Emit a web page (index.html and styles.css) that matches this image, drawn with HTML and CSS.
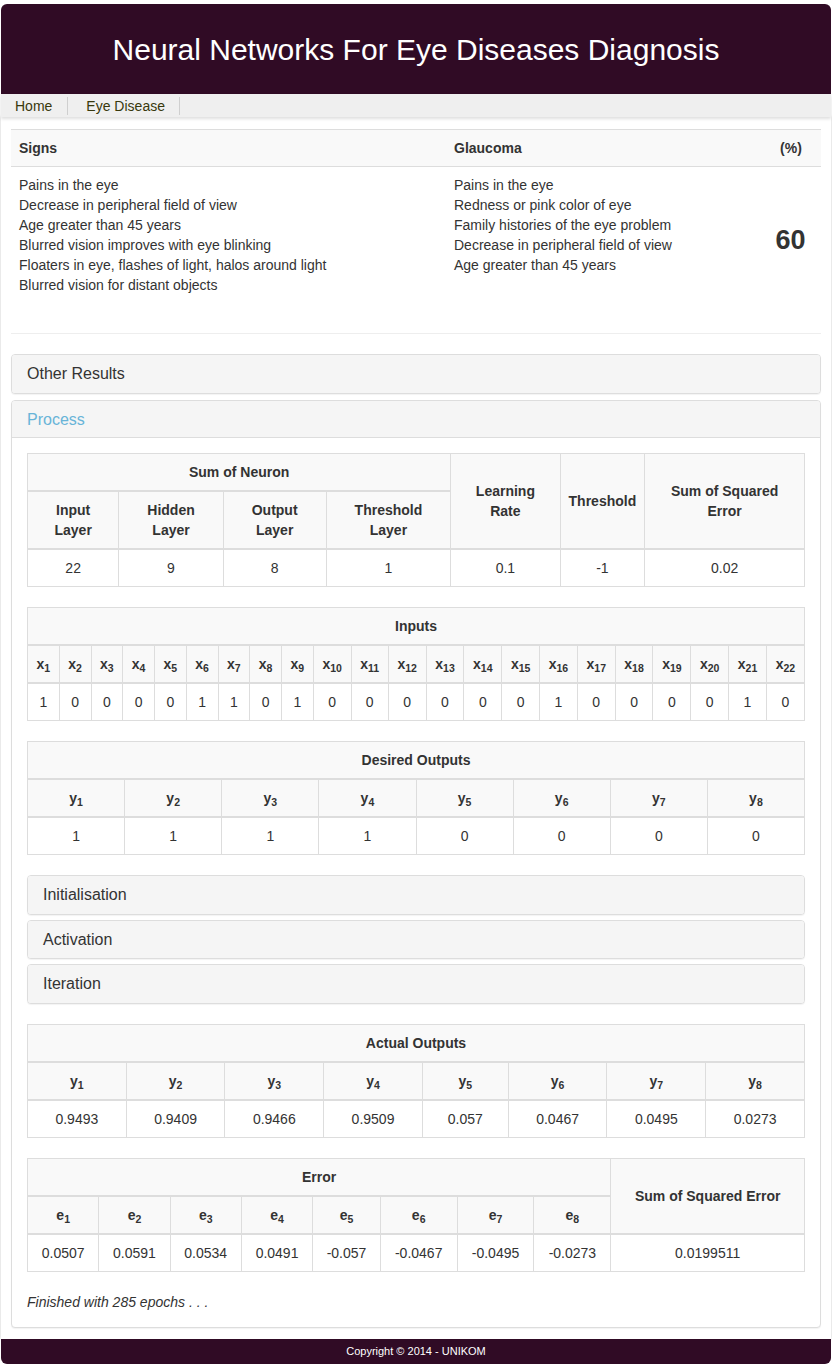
FILE: index.html
```html
<!DOCTYPE html>
<html lang="en">
<head>
<meta charset="utf-8">
<title>Neural Networks For Eye Diseases Diagnosis</title>
<link rel="stylesheet" href="styles.css">
</head>
<body>
<div class="page">
  <header class="site-header">
    <h1>Neural Networks For Eye Diseases Diagnosis</h1>
  </header>
  <nav class="nav">
    <a class="nav-item" href="#">Home</a>
    <a class="nav-item" href="#">Eye Disease</a>
  </nav>
  <main class="main">
    <table class="table signs">
      <thead>
        <tr>
          <th class="col-signs">Signs</th>
          <th class="col-disease">Glaucoma</th>
          <th class="col-pct">(%)</th>
        </tr>
      </thead>
      <tbody>
        <tr>
          <td>Pains in the eye<br>Decrease in peripheral field of view<br>Age greater than 45 years<br>Blurred vision improves with eye blinking<br>Floaters in eye, flashes of light, halos around light<br>Blurred vision for distant objects</td>
          <td>Pains in the eye<br>Redness or pink color of eye<br>Family histories of the eye problem<br>Decrease in peripheral field of view<br>Age greater than 45 years</td>
          <td class="pct">60</td>
        </tr>
      </tbody>
    </table>
    <hr class="divider">

    <div class="panel">
      <div class="panel-heading">Other Results</div>
    </div>
    <div class="panel panel-process">
      <div class="panel-heading panel-heading-open">Process</div>
      <div class="panel-body">
        <table class="table grid">
          <thead>
            <tr>
              <th colspan="4">Sum of Neuron</th>
              <th rowspan="2">Learning Rate</th>
              <th rowspan="2">Threshold</th>
              <th rowspan="2">Sum of Squared Error</th>
            </tr>
            <tr>
              <th>Input Layer</th>
              <th>Hidden Layer</th>
              <th>Output Layer</th>
              <th>Threshold Layer</th>
            </tr>
          </thead>
          <tbody>
            <tr><td>22</td><td>9</td><td>8</td><td>1</td><td>0.1</td><td>-1</td><td>0.02</td></tr>
          </tbody>
        </table>

        <table class="table grid">
          <thead>
            <tr><th colspan="22">Inputs</th></tr>
            <tr>
              <th>x<sub>1</sub></th><th>x<sub>2</sub></th><th>x<sub>3</sub></th><th>x<sub>4</sub></th><th>x<sub>5</sub></th><th>x<sub>6</sub></th><th>x<sub>7</sub></th><th>x<sub>8</sub></th><th>x<sub>9</sub></th><th>x<sub>10</sub></th><th>x<sub>11</sub></th><th>x<sub>12</sub></th><th>x<sub>13</sub></th><th>x<sub>14</sub></th><th>x<sub>15</sub></th><th>x<sub>16</sub></th><th>x<sub>17</sub></th><th>x<sub>18</sub></th><th>x<sub>19</sub></th><th>x<sub>20</sub></th><th>x<sub>21</sub></th><th>x<sub>22</sub></th>
            </tr>
          </thead>
          <tbody>
            <tr><td>1</td><td>0</td><td>0</td><td>0</td><td>0</td><td>1</td><td>1</td><td>0</td><td>1</td><td>0</td><td>0</td><td>0</td><td>0</td><td>0</td><td>0</td><td>1</td><td>0</td><td>0</td><td>0</td><td>0</td><td>1</td><td>0</td></tr>
          </tbody>
        </table>

        <table class="table grid">
          <thead>
            <tr><th colspan="8">Desired Outputs</th></tr>
            <tr><th>y<sub>1</sub></th><th>y<sub>2</sub></th><th>y<sub>3</sub></th><th>y<sub>4</sub></th><th>y<sub>5</sub></th><th>y<sub>6</sub></th><th>y<sub>7</sub></th><th>y<sub>8</sub></th></tr>
          </thead>
          <tbody>
            <tr><td>1</td><td>1</td><td>1</td><td>1</td><td>0</td><td>0</td><td>0</td><td>0</td></tr>
          </tbody>
        </table>

        <div class="panel-group">
          <div class="panel"><div class="panel-heading">Initialisation</div></div>
          <div class="panel"><div class="panel-heading">Activation</div></div>
          <div class="panel"><div class="panel-heading">Iteration</div></div>
        </div>

        <table class="table grid">
          <thead>
            <tr><th colspan="8">Actual Outputs</th></tr>
            <tr><th>y<sub>1</sub></th><th>y<sub>2</sub></th><th>y<sub>3</sub></th><th>y<sub>4</sub></th><th>y<sub>5</sub></th><th>y<sub>6</sub></th><th>y<sub>7</sub></th><th>y<sub>8</sub></th></tr>
          </thead>
          <tbody>
            <tr><td>0.9493</td><td>0.9409</td><td>0.9466</td><td>0.9509</td><td>0.057</td><td>0.0467</td><td>0.0495</td><td>0.0273</td></tr>
          </tbody>
        </table>

        <table class="table grid">
          <thead>
            <tr><th colspan="8">Error</th><th rowspan="2">Sum of Squared Error</th></tr>
            <tr><th>e<sub>1</sub></th><th>e<sub>2</sub></th><th>e<sub>3</sub></th><th>e<sub>4</sub></th><th>e<sub>5</sub></th><th>e<sub>6</sub></th><th>e<sub>7</sub></th><th>e<sub>8</sub></th></tr>
          </thead>
          <tbody>
            <tr><td>0.0507</td><td>0.0591</td><td>0.0534</td><td>0.0491</td><td>-0.057</td><td>-0.0467</td><td>-0.0495</td><td>-0.0273</td><td>0.0199511</td></tr>
          </tbody>
        </table>

        <p class="finished">Finished with 285 epochs . . .</p>
      </div>
    </div>
  </main>
  <footer class="site-footer">Copyright © 2014 - UNIKOM</footer>
</div>
</body>
</html>
```

FILE: styles.css
```css
* { box-sizing: border-box; }

body {
  margin: 0;
  font-family: "Liberation Sans", Arial, sans-serif;
  font-size: 14px;
  line-height: 1.42857;
  color: #333;
  background: #fff;
}

.page {
  margin: 4px 1px 3px;
}

.site-header {
  height: 90px;
  background: #300b25;
  border-radius: 6px 6px 0 0;
  display: flex;
  align-items: center;
  justify-content: center;
}

.site-header h1 {
  margin: 0;
  font-size: 30px;
  font-weight: normal;
  line-height: 1.1;
  color: #fff;
}

.nav {
  height: 23px;
  background: #efefef;
  display: flex;
  align-items: center;
  box-shadow: 0 2px 3px rgba(0, 0, 0, 0.13);
  position: relative;
  z-index: 1;
}

.nav-item {
  color: #38380c;
  text-decoration: none;
  padding: 0 14px 0 18px;
  line-height: 18px;
  border-right: 1px solid #cfcfcf;
}

.nav-item:first-child {
  padding: 0 15px 0 14px;
}

.main {
  padding: 12px 10px 11px 10px;
  box-shadow: 0 0 3px rgba(0, 0, 0, 0.22);
}

.table {
  width: 100%;
  border-collapse: collapse;
  border-spacing: 0;
}

.signs {
  margin-bottom: 30px;
}

.signs th {
  background: #f9f9f9;
  border-top: 1px solid #ddd;
  border-bottom: 1px solid #ddd;
  padding: 8px;
  text-align: left;
  line-height: 20px;
}

.signs td {
  padding: 8px;
  vertical-align: top;
  line-height: 20px;
}

.signs .col-signs { width: 435px; }
.signs .col-pct { width: 60px; text-align: center; }

.signs td.pct {
  font-size: 27px;
  font-weight: bold;
  text-align: center;
  vertical-align: middle;
  padding: 18px 8px 8px 7px;
}

.divider {
  margin: 0 0 20px;
  border: 0;
  border-top: 1px solid #eee;
}

.panel {
  border: 1px solid #ddd;
  border-radius: 4px;
  background: #fff;
  box-shadow: 0 1px 1px rgba(0, 0, 0, 0.05);
  overflow: hidden;
}

.panel + .panel {
  margin-top: 6px;
}

.panel-heading {
  background: #f5f5f5;
  padding: 10px 15px;
  font-size: 16px;
  line-height: 1.1;
  color: #333;
}

.panel-heading-open {
  color: #68b4d8;
  padding-bottom: 9px;
  border-bottom: 1px solid #ddd;
}

.panel-body {
  padding: 15px;
}

.panel-group {
  margin-bottom: 20px;
}

.panel-group .panel + .panel {
  margin-top: 5px;
}

.grid {
  border: 1px solid #ddd;
  margin-bottom: 20px;
}

.grid th,
.grid td {
  border: 1px solid #ddd;
  padding: 8px;
  text-align: center;
  vertical-align: middle;
  line-height: 20px;
}

.grid thead th {
  background: #f9f9f9;
  border-bottom-width: 2px;
}

sub {
  font-size: 75%;
  line-height: 0;
  position: relative;
  vertical-align: baseline;
  bottom: -0.25em;
}

.finished {
  margin: 0;
  font-style: italic;
  line-height: 20px;
}

.site-footer {
  height: 25px;
  background: #300b25;
  color: #fff;
  font-size: 11px;
  display: flex;
  align-items: center;
  justify-content: center;
  border-radius: 0 0 6px 6px;
}
```
